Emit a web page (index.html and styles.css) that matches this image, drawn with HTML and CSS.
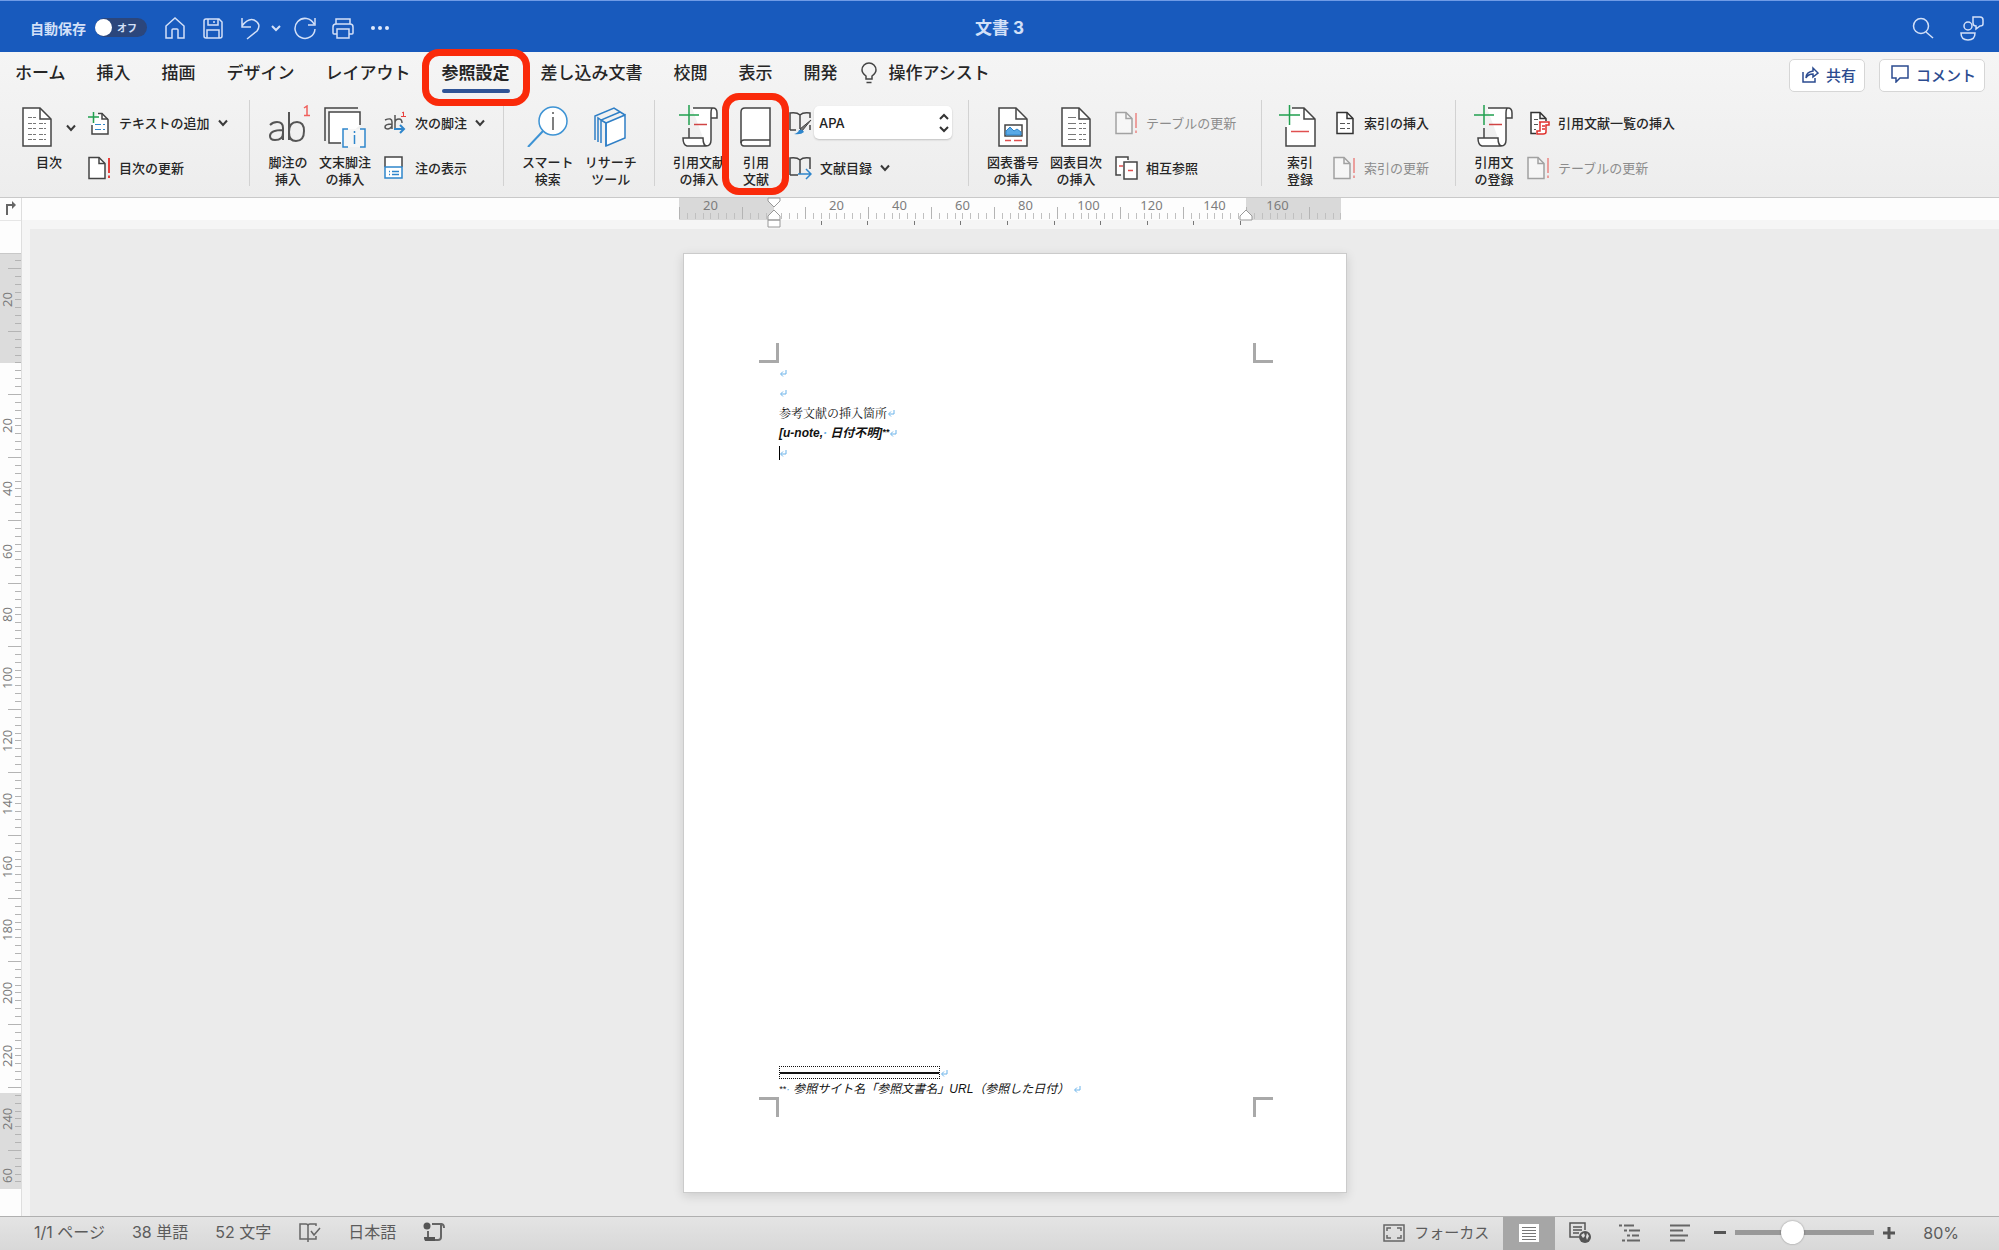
FILE: index.html
```html
<!DOCTYPE html>
<html lang="ja">
<head>
<meta charset="utf-8">
<title>文書 3</title>
<link rel="stylesheet" href="styles.css">
</head>
<body>
<svg class="defs" aria-hidden="true">
  <defs>
    <pattern id="h-ticks" width="63" height="22" patternUnits="userSpaceOnUse">
      <path d="M.5 9v12" stroke="#b4b4b4"/>
      <path d="M8.5 15v6M16.5 15v6M24.5 15v6M31.5 15v6M39.5 15v6M47.5 15v6M55.5 15v6" stroke="#c0c0c0"/>
    </pattern>
    <pattern id="v-ticks" width="21" height="63" y="15" patternUnits="userSpaceOnUse">
      <path d="M8 .5h13" stroke="#b4b4b4"/>
      <path d="M15 8.500h6M15 16.500h6M15 24.500h6M15 31.500h6M15 39.500h6M15 47.500h6M15 55.500h6" stroke="#b4b4b4"/>
    </pattern>
    <symbol id="chevron" viewBox="0 0 10 8"><path d="M1 1.500l4 4.500 4-4.500" fill="none" stroke="#3a3a3a" stroke-width="2"/></symbol>
    <symbol id="return" viewBox="0 0 8 8"><path d="M7 1v4H2M4 2.500L1.500 5 4 7.500" fill="none" stroke="#6db4ea"/></symbol>
    <symbol id="update" viewBox="0 0 23 24">
      <path d="M1 1.500h10l6 6V22.500H1z" fill="#fff" stroke="#444" stroke-width="1.500"/>
      <path d="M11 1.500v6h6" fill="none" stroke="#444" stroke-width="1.500"/>
      <path d="M21 2v15M21 19.500v2.500" stroke="#e8403c" stroke-width="2"/>
    </symbol>
    <symbol id="scroll" viewBox="0 0 44 42">
      <path d="M15 3h22q-3 1-3 5v26q0 6-6 7H10q-4-1-4-8h20q0 7 3 8M34 13h5V7q0-4-4-4" fill="#fff" stroke="none"/>
      <path d="M16 3h20q4 0 4 5v5h-6V8q0-5 2-5M34 13v22q0 6-5 6M12 23v10M29 41H10q-4-1-4-8h20q0 8 4 8" fill="none" stroke="#444" stroke-width="1.500"/>
      <path d="M2 10h20M12 0v20" stroke="#21a04f" stroke-width="1.500"/>
      <path d="M17 19.500h13" stroke="#d04444" stroke-width="1.500"/>
    </symbol>
  </defs>
</svg>

<header class="titlebar">
  <div class="quick">
    <span class="autosave">自動保存</span>
    <button class="toggle" aria-label="自動保存 オフ"><span class="knob"></span><span>オフ</span></button>
    <button class="tb-home" aria-label="ホームへ"><svg width="22" height="24" viewBox="0 0 22 24"><path d="M2 10L11 2l9 8v12h-6v-8q0-1-1-1H9q-1 0-1 1v8H2z"/></svg></button>
    <button class="tb-save" aria-label="保存"><svg width="22" height="24" viewBox="0 0 22 24"><path d="M2 5q0-2 2-2h13l3 3v14q0 2-2 2H4q-2 0-2-2zM6 3v6h10V3M5 22v-8h12v8M12 5v2"/></svg></button>
    <button class="tb-undo" aria-label="元に戻す"><svg width="22" height="24" viewBox="0 0 22 24"><path d="M2 2v9h9M2 10Q8 2 14 4q8 4 3 11L7 23"/></svg></button>
    <button class="tb-more" aria-label="元に戻す履歴"><svg width="10" height="8" viewBox="0 0 10 8"><path d="M1 2l4 4 4-4" stroke-width="2"/></svg></button>
    <button class="tb-redo" aria-label="やり直し"><svg width="24" height="24" viewBox="0 0 24 24"><path d="M22 2v7h-7M21 8A10 10 0 1 0 22 13"/></svg></button>
    <button class="tb-print" aria-label="印刷"><svg width="24" height="24" viewBox="0 0 24 24"><path d="M6 18H3q-1 0-1-1v-6q0-3 3-3h14q3 0 3 3v6q0 1-1 1h-3M5 8V3h14v5M6 13h12v9H6z"/></svg></button>
    <button class="tb-dots" aria-label="その他"><svg width="20" height="6" viewBox="0 0 20 6"><g fill="#dfe9fb" stroke="none"><circle cx="3" cy="3" r="2"/><circle cx="10" cy="3" r="2"/><circle cx="17" cy="3" r="2"/></g></svg></button>
  </div>
  <h1>文書 3</h1>
  <div class="tools">
    <button aria-label="検索"><svg width="22" height="24" viewBox="0 0 22 24"><circle cx="9" cy="10" r="7.500"/><path d="M14 16l7 6"/></svg></button>
    <button aria-label="共同作業"><svg width="25" height="26" viewBox="0 0 25 26"><circle cx="9" cy="11" r="4"/><path d="M2 18h14q0 7-7 7t-7-7zM14 2h7q3 0 3 3v4q0 2-3 2l-4 3v-3q-3 0-3-3z"/></svg></button>
  </div>
</header>

<div class="ribbon">
  <nav class="tabs">
    <a href="#">ホーム</a><a href="#">挿入</a><a href="#">描画</a><a href="#">デザイン</a><a href="#">レイアウト</a>
    <a href="#" class="current marked">参照設定</a><a href="#">差し込み文書</a><a href="#">校閲</a><a href="#">表示</a><a href="#">開発</a>
    <a href="#" class="assist"><svg width="16" height="22" viewBox="0 0 16 22"><path d="M5 17v-3Q1 11 1 8a7 7 0 0 1 14 0q0 3-4 6v3zM5.500 20.500h5" fill="none" stroke="#444" stroke-width="1.500"/></svg>操作アシスト</a>
    <div class="actions">
      <button><svg width="18" height="18" viewBox="0 0 18 18"><path d="M2 7v10h12v-4M5 13q0-6 7-7V3l5 5-5 4V9q-5 0-7 4z"/></svg>共有</button>
      <button><svg width="18" height="18" viewBox="0 0 18 18"><path d="M1 1h16v12H9l-4 4v-4H1z"/></svg>コメント</button>
    </div>
  </nav>

  <div class="groups">
    <section class="group g-toc">
      <button class="large wide">
        <span class="pic"><svg width="30" height="42" viewBox="0 0 30 42"><path d="M1 3h17l11 11v27H1z" fill="#fff" stroke="#444" stroke-width="1.500"/><path d="M18 3v11h11" fill="none" stroke="#444" stroke-width="1.500"/><path d="M6 12.500h8M6 18.500h8M6 23.500h8M6 29.500h8M6 34.500h8M17 18.500h7M17 23.500h7M17 29.500h7M17 34.500h7" stroke="#777" stroke-dasharray="4 1"/></svg><svg class="chev" width="10" height="8"><use href="#chevron"/></svg></span>
        目次
      </button>
      <div class="small">
        <button><svg width="23" height="24" viewBox="0 0 23 24"><path d="M10 2.500h4l6 6v14.500H4V14" fill="#fff" stroke="#444" stroke-width="1.500"/><path d="M14 2v6h6" fill="none" stroke="#444" stroke-width="1.500"/><path d="M0 6h11M5.500 1v11" stroke="#21a04f" stroke-width="1.500"/><path d="M7 13.500h10M7 18.500h10" stroke="#2f86cc" stroke-dasharray="6 2"/></svg>テキストの追加<svg class="chev" width="10" height="8"><use href="#chevron"/></svg></button>
        <button><svg width="23" height="24"><use href="#update"/></svg>目次の更新</button>
      </div>
    </section>

    <section class="group g-note">
      <button class="large">
        <span class="pic"><svg width="44" height="42" viewBox="0 0 44 42"><g fill="none" stroke="#555" stroke-width="2"><path d="M4 20q3-3 7-3 6 0 6 6v12M17 25q-13 0-13 6 0 4 5 4 8 0 8-7M23 7v28M23 27q0-10 8-10 7 0 7 9 0 10-8 10-7 0-7-9"/></g><path d="M38 3l3-2v10M38 10.500h6" fill="none" stroke="#f0605c" stroke-width="1.500"/></svg></span>
        脚注の<br>挿入
      </button>
      <button class="large">
        <span class="pic"><svg width="44" height="44" viewBox="0 0 44 44"><path d="M2 36V3h33" fill="none" stroke="#444" stroke-width="1.500"/><path d="M37 20V7H6v31h12" fill="#fff" stroke="#444" stroke-width="1.500"/><path d="M20 24h22v18H20z" fill="#f6f6f6"/><path d="M25 24h-5v18h5M37 24h5v18h-5M31.500 30v9M31.500 26v2" fill="none" stroke="#2f86cc" stroke-width="1.500"/></svg></span>
        文末脚注<br>の挿入
      </button>
      <div class="small">
        <button><svg width="23" height="24" viewBox="0 0 23 24"><path d="M1 9q7-3 7 2v7M8 13q-7 0-7 3 0 2 3 2 4-1 4-4M11 4v14M11 12q0-4 4-4 3 0 3 4" fill="none" stroke="#555" stroke-width="1.500"/><path d="M10 18h10M16 14l4 4-4 4" fill="none" stroke="#2f86cc" stroke-width="2"/><path d="M18 2l1.500-1v5M17 5.500h5" fill="none" stroke="#e8403c"/></svg>次の脚注<svg class="chev" width="10" height="8"><use href="#chevron"/></svg></button>
        <button><svg width="23" height="24" viewBox="0 0 23 24"><path d="M1 11V1h17v10" fill="#fff" stroke="#444" stroke-width="1.500"/><path d="M1 11h17v11H1zM5 15.500h1M8 15.500h7M5 18.500h1M8 18.500h7" fill="#fff" stroke="#2f86cc" stroke-width="1.500"/></svg>注の表示</button>
      </div>
    </section>

    <section class="group g-research">
      <button class="large">
        <span class="pic"><svg width="44" height="42" viewBox="0 0 44 42"><circle cx="27" cy="16" r="14" fill="#fff" stroke="#3d93d4" stroke-width="1.500"/><path d="M17 26L2 42" stroke="#3d93d4" stroke-width="2"/><path d="M27 12v13M27 7v2" stroke="#555" stroke-width="1.500"/></svg></span>
        スマート<br>検索
      </button>
      <button class="large">
        <span class="pic"><svg width="44" height="42" viewBox="0 0 44 42"><g fill="none" stroke="#2f7fc6" stroke-width="1.500"><path d="M17 18l19-8v23l-19 8z" fill="#fff"/><path d="M17 18l-5-3 19-8M12 38V15M36 10l-11-7L6 11v24M12 15l-3-2v24M17 18V41"/></g></svg></span>
        リサーチ<br>ツール
      </button>
    </section>

    <section class="group g-cite">
      <button class="large"><span class="pic"><svg width="44" height="42"><use href="#scroll"/></svg></span>引用文献<br>の挿入</button>
      <button class="large marked">
        <span class="pic"><svg width="44" height="42" viewBox="0 0 44 42"><path d="M36 3H11q-4 0-4 4v30q0 4 3 4h26z" fill="#fff" stroke="#444" stroke-width="1.500"/><path d="M36 35H10q-3 0-3 3" fill="none" stroke="#444" stroke-width="1.500"/></svg></span>
        引用<br>文献
      </button>
      <div class="small">
        <div class="field"><svg width="23" height="24" viewBox="0 0 23 24"><path d="M1 19V2q7-1 10 2 3-3 10-2v5M11 4v14M1 19h6M21 14v5" fill="none" stroke="#444" stroke-width="1.500"/><path d="M22 9l-9 11-2-2z" fill="#777" stroke="#444"/><path d="M5 23q4-1 5-4 4-1 5 2-3 3-10 2z" fill="#2f86cc"/></svg>
          <span class="picker"><select aria-label="引用文献のスタイル"><option>APA</option></select><svg width="10" height="20" viewBox="0 0 10 20"><path d="M1 6l4-4 4 4M1 14l4 4 4-4" fill="none" stroke="#333" stroke-width="2"/></svg></span></div>
        <button><svg width="23" height="24" viewBox="0 0 23 24"><path d="M1 19V2q7-1 10 2 3-3 10-2v11M11 4v14M1 19h8" fill="none" stroke="#444" stroke-width="1.500"/><path d="M9 18h13M17 13l5 5-5 5" fill="none" stroke="#2f86cc" stroke-width="1.500"/></svg>文献目録<svg class="chev" width="10" height="8"><use href="#chevron"/></svg></button>
      </div>
    </section>

    <section class="group g-caption">
      <button class="large">
        <span class="pic"><svg width="30" height="42" viewBox="0 0 30 42"><path d="M1 3h17l11 11v27H1z" fill="#fff" stroke="#444" stroke-width="1.500"/><path d="M18 3v11h11" fill="none" stroke="#444" stroke-width="1.500"/><path d="M7 20h17v11H7z" fill="#fff" stroke="#444" stroke-width="1.500"/><path d="M8 30v-4l4-4 4 4 3-2 4 3v3z" fill="#5aa9e6" stroke="#2f86cc"/><path d="M7 35.500h6M16 35.500h8" stroke="#e05050" stroke-width="1.500"/></svg></span>
        図表番号<br>の挿入
      </button>
      <button class="large">
        <span class="pic"><svg width="30" height="42" viewBox="0 0 30 42"><path d="M1 3h17l11 11v27H1z" fill="#fff" stroke="#444" stroke-width="1.500"/><path d="M18 3v11h11" fill="none" stroke="#444" stroke-width="1.500"/><path d="M7 12.500h8M7 18.500h8M7 23.500h8M7 29.500h8M7 34.500h8" stroke="#777"/><path d="M18 18.500h7M18 23.500h7M18 29.500h7M18 34.500h7" stroke="#777" stroke-dasharray="3 1"/></svg></span>
        図表目次<br>の挿入
      </button>
      <div class="small">
        <button disabled><svg width="23" height="24"><use href="#update"/></svg>テーブルの更新</button>
        <button><svg width="23" height="24" viewBox="0 0 23 24"><path d="M6 19H1V1h12v3" fill="#fff" stroke="#444" stroke-width="1.500"/><path d="M9 6h13v17H9z" fill="#fff" stroke="#444" stroke-width="1.500"/><path d="M4 10h4M13 14.500h5" stroke="#e05050" stroke-width="1.500"/></svg>相互参照</button>
      </div>
    </section>

    <section class="group g-index">
      <button class="large">
        <span class="pic"><svg width="44" height="42" viewBox="0 0 44 42"><path d="M15 3h11l11 11v27H8V22" fill="#fff"/><path d="M14 3h12l11 11v27H8V22M26 3v11h11" fill="none" stroke="#444" stroke-width="1.500"/><path d="M1 10h21M11.500 0v20" stroke="#21a04f" stroke-width="1.500"/><path d="M13 26.500h18" stroke="#e05050" stroke-width="1.500"/></svg></span>
        索引<br>登録
      </button>
      <div class="small">
        <button><svg width="23" height="24" viewBox="0 0 23 24"><path d="M4 1.500h10l6 6V22.500H4z" fill="#fff" stroke="#333" stroke-width="1.500"/><path d="M14 1.500v6h6" fill="none" stroke="#333" stroke-width="1.500"/><path d="M7 12.500h5M14 12.500h3M7 17.500h5M14 17.500h3" stroke="#555"/></svg>索引の挿入</button>
        <button disabled><svg width="23" height="24"><use href="#update"/></svg>索引の更新</button>
      </div>
    </section>

    <section class="group g-authority">
      <button class="large"><span class="pic"><svg width="44" height="42"><use href="#scroll"/></svg></span>引用文<br>の登録</button>
      <div class="small">
        <button><svg width="23" height="24" viewBox="0 0 23 24"><path d="M9 22.500H4V1.500h9l6 6V10M13 1.500v6h6" fill="#fff" stroke="#333" stroke-width="1.500"/><path d="M7 8.500h4M7 13.500h4M7 18.500h2" stroke="#555"/><path d="M12 11h10v3h-3v7q0 2-3 2h-6v-3h3V11M15 15h3M15 18h3" fill="#fff" stroke="#e0302c" stroke-width="1.500"/></svg>引用文献一覧の挿入</button>
        <button disabled><svg width="23" height="24"><use href="#update"/></svg>テーブルの更新</button>
      </div>
    </section>
  </div>
</div>

<main class="workspace">
  <div class="corner"><svg width="12" height="15" viewBox="0 0 12 15"><path d="M2 14V4h6" fill="none" stroke="#666" stroke-width="2"/><path d="M7 0l4 4-4 4z" fill="#666"/></svg></div>
  <div class="hruler">
    <div class="scale">
      <svg class="ticks" aria-hidden="true"><rect width="662" height="22" fill="url(#h-ticks)"/></svg>
      <div class="labels"><span>20</span><span></span><span>20</span><span>40</span><span>60</span><span>80</span><span>100</span><span>120</span><span>140</span><span>160</span></div>
      <svg class="ticks stops" aria-hidden="true"><path d="M142.500 23v4M188.500 23v4M235.500 23v4M281.500 23v4M328.500 23v4M375.500 23v4M421.500 23v4M468.500 23v4M514.500 23v4M561.500 23v4" stroke="#777"/>
        <g fill="#fff" stroke="#999"><path d="M89 0v3l6 6 6-6V0zM89 22v-4l6-6 6 6v4zM89 22h12v7H89zM561 22v-4l6-6 6 6v4z"/></g></svg>
    </div>
  </div>
  <div class="vruler">
    <div class="scale">
      <svg class="ticks" aria-hidden="true"><rect width="21" height="936" fill="url(#v-ticks)"/></svg>
      <div class="labels"><span>20</span><span></span><span>20</span><span>40</span><span>60</span><span>80</span><span>100</span><span>120</span><span>140</span><span>160</span><span>180</span><span>200</span><span>220</span><span>240</span><span class="last">60</span></div>
    </div>
  </div>
  <div class="canvas">
    <article class="sheet">
      <i class="crop tl"></i><i class="crop tr"></i><i class="crop bl"></i><i class="crop br"></i>
      <p><svg width="8" height="8"><use href="#return"/></svg></p>
      <p><svg width="8" height="8"><use href="#return"/></svg></p>
      <p class="mincho">参考文献の挿入箇所<svg width="8" height="8"><use href="#return"/></svg></p>
      <p class="cite">[u-note,<span class="dot">·</span> 日付不明]<sup>**</sup><svg width="8" height="8"><use href="#return"/></svg></p>
      <p class="caret"><svg width="8" height="8"><use href="#return"/></svg></p>
      <footer>
        <div class="sep"><span></span><svg width="8" height="8"><use href="#return"/></svg></div>
        <p class="note"><sup>**</sup><span class="dot">·</span> 参照サイト名「参照文書名」URL（参照した日付）<svg width="8" height="8"><use href="#return"/></svg></p>
      </footer>
    </article>
  </div>
</main>

<footer class="status">
  <span>1/1 ページ</span><span>38 単語</span><span>52 文字</span>
  <button aria-label="文章校正"><svg width="23" height="20" viewBox="0 0 23 20"><path d="M10 3v14M10 17H2V2h6q2 0 2 2 0-2 2-2h6v2M10 17h8v-3M10 17v3M13 9l3 4 6-7" fill="none" stroke="#666" stroke-width="1.500"/></svg></button>
  <span>日本語</span>
  <button aria-label="マクロの記録"><svg width="22" height="20" viewBox="0 0 22 20"><circle cx="4" cy="4" r="3.500" fill="#555"/><path d="M9 2h9v13q0 3-3 3H2M5 9v7M18 2q3 0 3 4" fill="none" stroke="#666" stroke-width="2"/><path d="M1 15h11v4H3q-2 0-2-4z" fill="#555"/></svg></button>
  <div class="views">
    <button class="focus"><svg width="22" height="18" viewBox="0 0 22 18"><path d="M1 1h20v16H1z" fill="none" stroke="#666" stroke-width="1.500"/><path d="M4 7V4h4M14 4h4v3M18 11v3h-4M8 14H4v-3" fill="none" stroke="#666" stroke-width="1.500"/></svg>フォーカス</button>
    <button class="view active" aria-label="印刷レイアウト"><svg width="22" height="20" viewBox="0 0 22 20"><path d="M1 1h20v18H1z" fill="#fff"/><path d="M4 4.500h14M4 7.500h14M4 10.500h14M4 13.500h14M4 16.500h14" stroke="#777"/></svg></button>
    <button class="view" aria-label="Web レイアウト"><svg width="23" height="22" viewBox="0 0 23 22"><path d="M10 15H1V1h15v7M4 5h9M4 8h9M4 11h6" fill="none" stroke="#555" stroke-width="1.500"/><circle cx="16" cy="15" r="6" fill="#555"/><path d="M12 13l3-2 1 3-2 2zM18 11l2 3-2 4-1-3z" fill="#ddd"/></svg></button>
    <button class="view" aria-label="アウトライン"><svg width="22" height="18" viewBox="0 0 22 18"><path d="M0 1.500h3M5 1.500h10M5 6.500h3M10 6.500h11M8 11.500h3M13 11.500h7M3 16.500h3M8 16.500h13" stroke="#666" stroke-width="2"/></svg></button>
    <button class="view" aria-label="下書き"><svg width="22" height="18" viewBox="0 0 22 18"><path d="M1 1.500h20M1 6.500h13M1 11.500h18M1 16.500h15" stroke="#666" stroke-width="2"/></svg></button>
    <button aria-label="縮小"><svg width="12" height="12" viewBox="0 0 12 12"><path d="M0 5.500h12" stroke="#555" stroke-width="3"/></svg></button>
    <input type="range" min="0" max="100" value="39" aria-label="ズーム">
    <button aria-label="拡大"><svg width="12" height="12" viewBox="0 0 12 12"><path d="M0 6h12M6 0v12" stroke="#555" stroke-width="3"/></svg></button>
    <output>80%</output>
  </div>
</footer>
</body>
</html>
```
FILE: styles.css
```css
* { box-sizing: border-box; }

body {
  margin: 0;
  min-height: 100vh;
  display: flex;
  flex-direction: column;
  background: #ebebeb;
  color: #262626;
  font-family: Inter, "Noto Sans CJK JP", sans-serif;
  font-size: 13px;
}

button {
  margin: 0;
  padding: 0;
  border: 0;
  background: none;
  color: inherit;
  font: inherit;
}

svg { display: block; flex: none; }
.defs { position: absolute; width: 0; height: 0; }

/* Title bar */
.titlebar {
  display: grid;
  grid-template-columns: 1fr auto 1fr;
  align-items: center;
  height: 52px;
  padding: 2px 15px 0;
  border-top: 1px solid #6f9be6;
  background: #185abd;
  color: #d3e0f8;
}
.titlebar svg { fill: none; stroke: #d3e0f8; stroke-width: 1.5; }
.titlebar h1 { margin: 0; font-size: 17px; line-height: 24px; }
.quick { display: flex; align-items: center; padding-left: 15px; }
.autosave { font-size: 14px; font-weight: 700; }
.toggle {
  display: flex;
  align-items: center;
  gap: 5px;
  width: 52px;
  height: 19px;
  margin-left: 9px;
  border-radius: 10px;
  background: #2b467c;
  font-size: 10px;
  font-weight: 700;
}
.knob { width: 17px; height: 17px; border-radius: 50%; background: #fff; }
.tb-home { margin-left: 17px; }
.tb-save { margin-left: 16px; }
.tb-undo { margin-left: 16px; }
.tb-more { margin-left: 9px; }
.tb-redo { margin-left: 12px; }
.tb-print { margin-left: 14px; }
.tb-dots { margin-left: 15px; }
.tools { display: flex; align-items: center; justify-content: flex-end; gap: 25px; }

/* Ribbon */
.ribbon {
  height: 146px;
  border-bottom: 1px solid #c9c9c9;
  background: linear-gradient(#f5f5f5, #ededed);
}
.tabs {
  display: flex;
  align-items: center;
  gap: 31px;
  height: 48px;
  padding: 0 14px 6px 15px;
}
.tabs a {
  position: relative;
  color: #262626;
  font-size: 17px;
  font-weight: 500;
  line-height: 24px;
  text-decoration: none;
  white-space: nowrap;
}
.tabs .current { font-weight: 700; }
.tabs .current::before {
  content: "";
  position: absolute;
  inset: auto 0 -8px;
  height: 4px;
  border-radius: 2px;
  background: #2f5496;
}
.tabs .assist { display: flex; align-items: center; gap: 12px; margin-left: -8px; }
.marked { position: relative; }
.marked::after {
  content: "";
  position: absolute;
  z-index: 2;
  border: 7px solid #fa2a0a;
  border-radius: 17px;
}
.tabs .marked::after { inset: -12px -20px -21px; }
.large.marked::after { inset: -12px -13px -7px -14px; }

.actions { display: flex; gap: 14px; margin: 4px 0 0 auto; }
.actions button {
  display: flex;
  align-items: center;
  gap: 7px;
  height: 33px;
  padding: 0 8px 2px 11px;
  border: 1px solid #d6d6d6;
  border-radius: 5px;
  background: #fff;
  color: #2b4b90;
  font-size: 15px;
  font-weight: 500;
}
.actions svg { fill: none; stroke: #2b4b90; stroke-width: 1.5; }

.groups { display: flex; }
.group {
  display: flex;
  align-items: flex-start;
  height: 86px;
  padding: 5px 0 0 18px;
  border-right: 1px solid #d2d2d2;
  font-weight: 500;
  white-space: nowrap;
}
.group:last-child { border-right: 0; }
.g-toc { width: 250px; padding-left: 20px; }
.g-note { width: 254px; }
.g-research { width: 151px; }
.g-cite { width: 314px; }
.g-caption { width: 293px; }
.g-index { width: 194px; }
.large {
  min-width: 40px;
  line-height: 17px;
  text-align: center;
}
.large + .large { margin-left: 11px; }
.large.wide { width: 58px; }
.pic {
  display: flex;
  justify-content: center;
  align-items: flex-start;
  gap: 14px;
  height: 49px;
  margin: 0 -2px;
}
.pic .chev { margin-top: 19px; }
.small {
  display: flex;
  flex-direction: column;
  gap: 12px;
  padding: 1px 0 0 13px;
}
.g-toc .small { padding-left: 10px; }
.small button, .field { display: flex; align-items: center; gap: 8px; height: 33px; }
.small button:disabled { color: #8c8c8c; font-weight: 400; }
.small button:disabled svg { opacity: .45; }
.small .field { gap: 2px; }
.picker { display: flex; align-items: center; }
.picker select {
  appearance: none;
  width: 138px;
  height: 33px;
  padding: 0 28px 0 5px;
  border: 0;
  border-radius: 5px;
  background: #fff;
  box-shadow: 0 1px 2px #0003;
  color: #222;
  font: inherit;
}
.picker svg { margin-left: -13px; pointer-events: none; }

/* Rulers and document canvas */
.workspace {
  flex: 1;
  display: grid;
  grid-template-columns: 22px 1fr;
  grid-template-rows: 31px 1fr;
}
.corner {
  padding: 3px 0 0 5px;
  border-right: 1px solid #dedede;
  background: linear-gradient(#fdfdfd 22px, #e6e6e6 22px, #e6e6e6 23px, #fdfdfd 23px);
}
.hruler {
  display: flex;
  justify-content: center;
  padding-right: 1px;
  background: linear-gradient(#fdfdfd 22px, #f5f5f5 22px);
}
.scale { display: grid; color: #7d7d7d; font-family: "Noto Sans", sans-serif; font-size: 13px; }
.scale > * { grid-area: 1 / 1; }
.hruler .scale {
  width: 662px;
  height: 22px;
  background: linear-gradient(90deg, #d9d9d9 95px, #fdfdfd 95px, #fdfdfd 567px, #d9d9d9 567px);
}
.ticks { width: 100%; height: 100%; overflow: visible; }
.labels { display: flex; }
.labels span { flex: none; display: flex; justify-content: center; }
.hruler .labels span { width: 63px; line-height: 15px; }
.vruler { padding-top: 24px; border-right: 1px solid #dedede; background: #fdfdfd; }
.vruler .scale {
  height: 936px;
  background: linear-gradient(#c8c8c8 1px, #dcdcdc 1px, #dcdcdc 110px, #fdfdfd 110px, #fdfdfd 840px, #dcdcdc 840px);
}
.vruler .labels { flex-direction: column; height: 936px; padding-top: 15px; }
.vruler .labels span {
  height: 63px;
  width: 14px;
  line-height: 14px;
  writing-mode: vertical-rl;
  transform: rotate(180deg);
}
.vruler .labels .last { height: 51px; }
.canvas {
  display: flex;
  justify-content: center;
  align-items: flex-start;
  padding: 24px 0 23px 1px;
  border-left: 8px solid #f5f5f5;
  background: #ebebeb;
}
.sheet {
  position: relative;
  display: flex;
  flex-direction: column;
  width: 664px;
  min-height: 940px;
  padding: 109px 94px 94px 95px;
  border: 1px solid #cbcbcb;
  background: #fff;
  box-shadow: 0 3px 10px #0002;
  color: #111;
  font-size: 12px;
}
.sheet p {
  display: flex;
  align-items: center;
  height: 20px;
  margin: 0;
  line-height: 20px;
  white-space: pre;
}
.mincho { font-family: "Noto Serif CJK JP", "Noto Sans CJK JP", serif; }
.cite, .note { font-family: "Liberation Sans", "Noto Sans CJK JP", sans-serif; font-style: italic; }
.cite { font-weight: 700; }
.sheet sup { align-self: flex-start; font-size: 9px; line-height: 18px; }
.dot { color: #6db4ea; }
.caret { position: relative; }
.caret::before { content: ""; position: absolute; width: 1px; height: 14px; background: #000; }
.sheet footer { margin-top: auto; }
.sep { display: flex; align-items: center; height: 13px; }
.sep span {
  width: 161px;
  height: 13px;
  border: 1px dotted #111;
  background: linear-gradient(#111, #111) center / 100% 2px no-repeat;
}
.sheet .note { height: 18px; margin-top: 1px; line-height: 18px; }
.note svg { margin-left: 4px; }
.crop { position: absolute; width: 20px; height: 20px; border: 0 solid #a9a9a9; }
.tl { left: 75px; top: 89px; border-width: 0 3px 3px 0; }
.tr { right: 73px; top: 89px; border-width: 0 0 3px 3px; }
.bl { left: 75px; bottom: 75px; border-width: 3px 3px 0 0; }
.br { right: 73px; bottom: 75px; border-width: 3px 0 0 3px; }

/* Status bar */
.status {
  display: flex;
  align-items: center;
  gap: 27px;
  height: 34px;
  padding: 0 40px 0 34px;
  border-top: 1px solid #b0b0b0;
  background: linear-gradient(#e4e4e4, #d8d8d8);
  color: #5c5c5c;
  font-size: 16px;
  line-height: 24px;
}
.status > span, .status > button { padding-bottom: 3px; }
.views { display: flex; align-items: center; align-self: stretch; margin-left: auto; }
.views > * { padding-bottom: 2px; }
.focus { display: flex; align-items: center; gap: 9px; margin-right: 14px; font-size: 15px; }
.view { display: grid; place-items: center; align-self: stretch; width: 50px; }
.view.active { width: 52px; background: #a6a6a6; }
.views input {
  appearance: none;
  width: 139px;
  height: 23px;
  margin: 0 9px 2px;
  padding: 0;
  background: linear-gradient(#999, #999) center / 100% 5px no-repeat;
}
.views input::-webkit-slider-thumb {
  appearance: none;
  width: 23px;
  height: 23px;
  border-radius: 50%;
  background: #fff;
  box-shadow: 0 0 2px #0006;
}
.view + button:not(.view) { margin-left: 9px; }
.views output { margin-left: 28px; }
```
